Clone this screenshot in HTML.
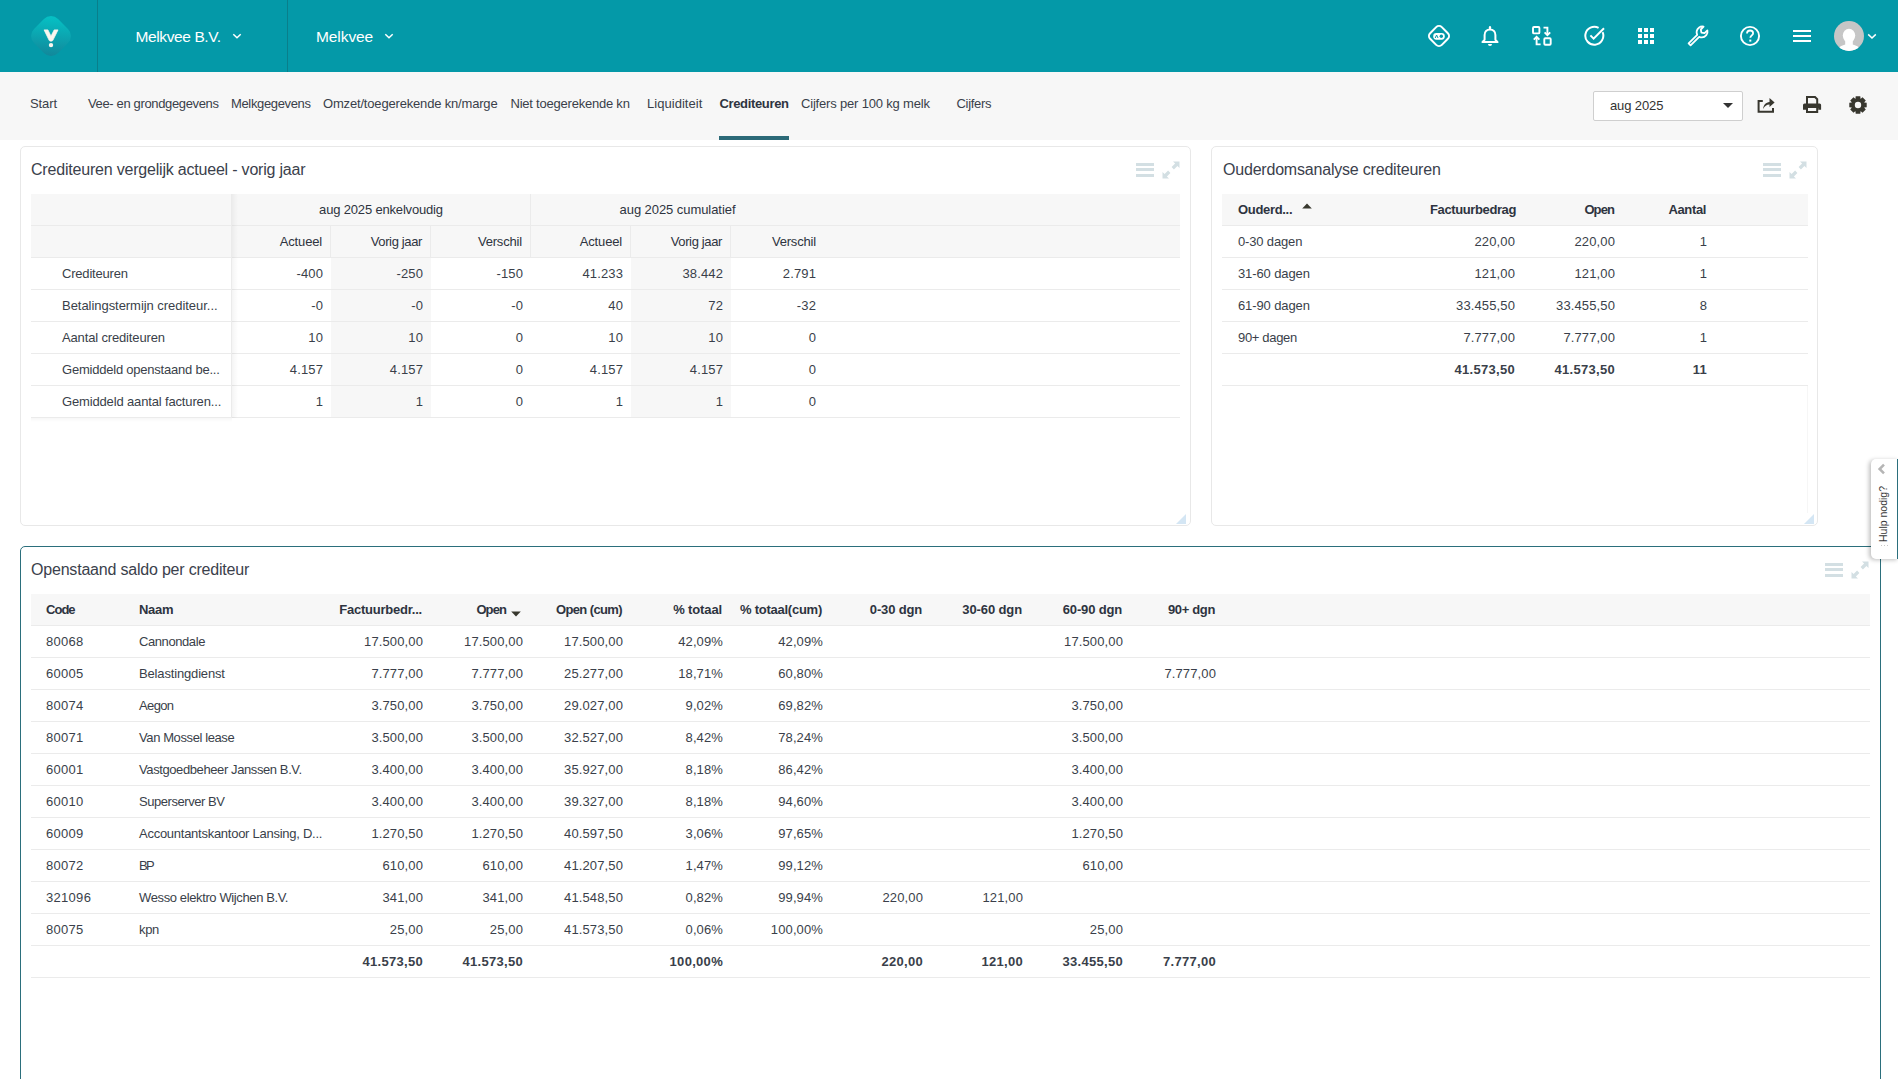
<!DOCTYPE html>
<html><head><meta charset="utf-8">
<style>
*{box-sizing:border-box;margin:0;padding:0}
html,body{width:1898px;height:1079px;overflow:hidden;background:#fff;font-family:"Liberation Sans",sans-serif;color:#3a3f4a}
.ab{position:absolute}
.nw{white-space:nowrap}
#top{position:absolute;left:0;top:0;width:1898px;height:72px;background:#0499a8}
.sep{position:absolute;top:0;width:1px;height:72px;background:#0a7f8b}
.htxt{position:absolute;top:28px;color:#fff;font-size:15.5px;line-height:18px;white-space:nowrap}
#nav{position:absolute;left:0;top:72px;width:1898px;height:68px;background:#f7f7f7}
.tab{position:absolute;top:96px;font-size:13px;line-height:15px;color:#3a3f4a;white-space:nowrap}
.panel{position:absolute;background:#fff;border:1px solid #e8e8e8;border-radius:5px}
.ptitle{position:absolute;font-size:16px;line-height:18px;color:#3b414c;white-space:nowrap;letter-spacing:-0.2px}
.row{position:absolute;height:32px;border-bottom:1px solid #ebebeb;display:flex}
.cell{height:31px;line-height:31px;font-size:13px;padding:0 8px;white-space:nowrap;overflow:hidden;text-align:right;flex:none}
.hd{background:#f7f7f7}
.hd .cell{color:#2e3440}
.cell{letter-spacing:0.12px}
.l{text-align:left;letter-spacing:-0.3px}
.hd .cell{letter-spacing:-0.3px}
.code{letter-spacing:0.3px}
.hd .b{padding-right:9px}
.c{text-align:center}
.b{font-weight:bold;letter-spacing:-0.25px}
.bn{font-weight:bold;letter-spacing:0.3px}
.g{background:#f7f7f7}
.br{border-right:1px solid #ebebeb}
.pic{position:absolute}
</style></head><body>

<div id="top">
<svg class="ab" style="left:26px;top:11px" width="50" height="50" viewBox="0 0 50 50">
<defs><linearGradient id="lg" x1="0.15" y1="0.1" x2="0.9" y2="0.95"><stop offset="0" stop-color="#06bfc3"/><stop offset="1" stop-color="#12879a"/></linearGradient></defs>
<rect x="8" y="8" width="34" height="34" rx="10" transform="rotate(45 25 25)" fill="url(#lg)"/>
<path d="M18.1 18.9 L21.9 18.9 L25 25.2 L28.2 18.9 L32 18.9 L26.7 29.6 Q25 30.8 23.3 29.6 Z" fill="#fbf6ef" stroke="#fbf6ef" stroke-width="0.8" stroke-linejoin="round"/>
<circle cx="25" cy="34.1" r="2.2" fill="#fbf6ef"/>
</svg>
<div class="sep" style="left:97px"></div>
<div class="htxt" style="left:135.5px;letter-spacing:-0.393px">Melkvee B.V.</div>
<svg class="ab" style="left:231px;top:32px" width="12" height="8" viewBox="0 0 12 8"><path d="M2.3 2.2 L6 5.8 L9.7 2.2" fill="none" stroke="#fff" stroke-width="1.5"/></svg>
<div class="sep" style="left:287px"></div>
<div class="htxt" style="left:316px;letter-spacing:-0.086px">Melkvee</div>
<svg class="ab" style="left:383px;top:32px" width="12" height="8" viewBox="0 0 12 8"><path d="M2.3 2.2 L6 5.8 L9.7 2.2" fill="none" stroke="#fff" stroke-width="1.5"/></svg>
<svg class="ab" style="left:1427px;top:24px" width="24" height="24" viewBox="0 0 24 24">
<rect x="3.75" y="3.75" width="16.5" height="16.5" rx="4" transform="rotate(45 12 12)" fill="none" stroke="#fff" stroke-width="2"/>
<rect x="6.2" y="9.1" width="11.6" height="6.6" rx="3.1" fill="#fff"/>
<path d="M8.2 14 L9.6 11 L11 14" fill="none" stroke="#0499a8" stroke-width="1"/>
<circle cx="14.3" cy="12.2" r="1.7" fill="#0499a8"/>
</svg>
<svg class="ab" style="left:1480px;top:25px" width="20" height="22" viewBox="0 0 20 22">
<path d="M10 2.2 L10 3.6" stroke="#fff" stroke-width="2.2" stroke-linecap="round"/>
<path d="M2.4 17.1 L4.6 14.8 L4.6 9.9 C4.6 6.7 6.8 4.4 10 4.4 C13.2 4.4 15.4 6.7 15.4 9.9 L15.4 14.8 L17.6 17.1 Z" fill="none" stroke="#fff" stroke-width="2" stroke-linejoin="round"/>
<path d="M8 19 L12 19 A2 1.9 0 0 1 8 19 Z" fill="#fff"/>
</svg>
<svg class="ab" style="left:1531px;top:25px" width="22" height="22" viewBox="0 0 22 22">
<rect x="2" y="2" width="6.4" height="6.4" rx="1" fill="none" stroke="#fff" stroke-width="1.9"/>
<rect x="13.3" y="13.3" width="6.4" height="6.4" rx="1" fill="none" stroke="#fff" stroke-width="1.9"/>
<path d="M12.5 2.6 L16.4 2.6 L16.4 9.6" fill="none" stroke="#fff" stroke-width="1.9"/>
<path d="M13.6 7.4 L16.4 10.2 L19.2 7.4" fill="none" stroke="#fff" stroke-width="1.9"/>
<path d="M9.6 19.4 L5.6 19.4 L5.6 12.4" fill="none" stroke="#fff" stroke-width="1.9"/>
<path d="M2.8 14.6 L5.6 11.8 L8.4 14.6" fill="none" stroke="#fff" stroke-width="1.9"/>
</svg>
<svg class="ab" style="left:1583.7px;top:25px" width="22" height="22" viewBox="0 0 22 22">
<path d="M18.6 7.2 A9 9 0 1 1 14.6 2.8" fill="none" stroke="#fff" stroke-width="2"/>
<path d="M6.4 10.4 L9.6 13.6 L20 3.2" fill="none" stroke="#fff" stroke-width="2"/>
</svg>
<svg class="ab" style="left:1638px;top:28px" width="16" height="16" viewBox="0 0 16 16"><rect x="0" y="0" width="4" height="4" fill="#fff"/><rect x="0" y="6" width="4" height="4" fill="#fff"/><rect x="0" y="12" width="4" height="4" fill="#fff"/><rect x="6" y="0" width="4" height="4" fill="#fff"/><rect x="6" y="6" width="4" height="4" fill="#fff"/><rect x="6" y="12" width="4" height="4" fill="#fff"/><rect x="12" y="0" width="4" height="4" fill="#fff"/><rect x="12" y="6" width="4" height="4" fill="#fff"/><rect x="12" y="12" width="4" height="4" fill="#fff"/></svg>
<svg class="ab" style="left:1686px;top:24px" width="24" height="24" viewBox="0 0 24 24">
<path d="M2.6 19.4 L11.2 10.8 C10.2 8.4 10.8 5.4 12.9 3.7 C14.3 2.6 16 2.2 17.6 2.6 L14.8 5.5 L15.4 8.6 L18.5 9.2 L21.4 6.4 C21.8 8 21.4 9.7 20.3 11.1 C18.6 13.2 15.6 13.8 13.2 12.8 L4.6 21.4 Z" fill="none" stroke="#fff" stroke-width="1.8" stroke-linejoin="round"/>
</svg>
<svg class="ab" style="left:1739px;top:25px" width="22" height="22" viewBox="0 0 22 22">
<circle cx="11" cy="11" r="9.1" fill="none" stroke="#fff" stroke-width="1.9"/>
<path d="M8 8.6 C8 6.7 9.4 5.5 11.1 5.5 C12.8 5.5 14.1 6.7 14.1 8.3 C14.1 10.3 11.3 10.6 11.3 12.8" fill="none" stroke="#fff" stroke-width="1.8"/>
<rect x="10.3" y="14.6" width="2" height="2" fill="#fff"/>
</svg>
<div class="ab" style="left:1793px;top:30px;width:18px;height:2px;background:#fff"></div>
<div class="ab" style="left:1793px;top:35px;width:18px;height:2px;background:#fff"></div>
<div class="ab" style="left:1793px;top:40px;width:18px;height:2px;background:#fff"></div>
<svg class="ab" style="left:1834px;top:21px" width="30" height="30" viewBox="0 0 30 30">
<defs><clipPath id="cc"><circle cx="15" cy="15" r="15"/></clipPath></defs>
<circle cx="15" cy="15" r="15" fill="#c6c6c6"/>
<g clip-path="url(#cc)"><ellipse cx="15" cy="14.6" rx="6.2" ry="6.9" fill="#fff"/><rect x="11.2" y="19.5" width="7.6" height="5" fill="#fff"/><ellipse cx="15" cy="30.6" rx="11.8" ry="7.4" fill="#fff"/></g>
</svg>
<svg class="ab" style="left:1867px;top:33px" width="10" height="7" viewBox="0 0 10 7"><path d="M1.2 1.4 L5 5 L8.8 1.4" fill="none" stroke="#fff" stroke-width="1.5"/></svg>
</div>
<div id="nav"></div>
<div class="tab" style="left:30.0px;letter-spacing:-0.113px">Start</div>
<div class="tab" style="left:88.0px;letter-spacing:-0.355px">Vee- en grondgegevens</div>
<div class="tab" style="left:231.0px;letter-spacing:-0.351px">Melkgegevens</div>
<div class="tab" style="left:323.0px;letter-spacing:-0.175px">Omzet/toegerekende kn/marge</div>
<div class="tab" style="left:510.5px;letter-spacing:-0.222px">Niet toegerekende kn</div>
<div class="tab" style="left:647.0px;letter-spacing:0.035px">Liquiditeit</div>
<div class="tab" style="left:719.4px;letter-spacing:-0.337px;font-weight:bold;color:#2e3440">Crediteuren</div>
<div class="tab" style="left:801.0px;letter-spacing:-0.180px">Cijfers per 100 kg melk</div>
<div class="tab" style="left:956.5px;letter-spacing:-0.307px">Cijfers</div>
<div class="ab" style="left:719px;top:136px;width:70px;height:4px;background:#2c6a78"></div>
<div class="ab" style="left:1593px;top:91px;width:150px;height:30px;background:#fff;border:1px solid #cfcfcf;border-radius:2px"></div>
<div class="ab nw" style="left:1610px;top:98px;font-size:13px;line-height:15px;color:#333;letter-spacing:-0.12px">aug 2025</div>
<svg class="ab" style="left:1722px;top:102px" width="12" height="7" viewBox="0 0 12 7"><path d="M1 1 L11 1 L6 6 Z" fill="#333"/></svg>
<svg class="ab" style="left:1756px;top:96px" width="20" height="18" viewBox="0 0 20 18">
<path d="M6.8 4.9 L2.6 4.9 L2.6 15.7 L17 15.7 L17 12.1" fill="none" stroke="#38372f" stroke-width="2"/>
<path d="M7.2 13 C7.4 9 10 6.4 13.5 6.1 L13.5 1.9 L18.6 6.4 L13.5 10.9 L13.5 8.4 C10.6 8.4 8.6 10 7.2 13 Z" fill="#38372f"/>
</svg>
<svg class="ab" style="left:1802px;top:95px" width="21" height="20" viewBox="0 0 21 20">
<path d="M5 9 L5 2 L13 2 L15.2 4.2 L15.2 9" fill="none" stroke="#38372f" stroke-width="2"/>
<path d="M1 10 Q1 8.5 2.5 8.5 L17.6 8.5 Q19.1 8.5 19.1 10 L19.1 14.8 L16.2 14.8 L16.2 13 L4 13 L4 14.8 L1 14.8 Z" fill="#38372f"/>
<path d="M5 13 L5 17 L15.2 17 L15.2 13" fill="none" stroke="#38372f" stroke-width="2"/>
</svg>
<svg class="ab" style="left:1849px;top:96px" width="18" height="18" viewBox="0 0 18 18"><path d="M17.70,6.69 L17.70,11.31 L15.08,11.57 L15.12,11.48 L16.79,13.51 L13.51,16.79 L11.48,15.12 L11.57,15.08 L11.31,17.70 L6.69,17.70 L6.43,15.08 L6.52,15.12 L4.49,16.79 L1.21,13.51 L2.88,11.48 L2.92,11.57 L0.30,11.31 L0.30,6.69 L2.92,6.43 L2.88,6.52 L1.21,4.49 L4.49,1.21 L6.52,2.88 L6.43,2.92 L6.69,0.30 L11.31,0.30 L11.57,2.92 L11.48,2.88 L13.51,1.21 L16.79,4.49 L15.12,6.52 L15.08,6.43 Z M9 5.8 A3.2 3.2 0 1 0 9 12.2 A3.2 3.2 0 1 0 9 5.8 Z" fill="#38372f" fill-rule="evenodd"/></svg>
<div class="panel" style="left:20px;top:146px;width:1171px;height:380px"></div>
<div class="ptitle" style="left:31px;top:161px">Crediteuren vergelijk actueel - vorig jaar</div>
<div class="ab" style="left:1136px;top:163.0px;width:17.5px;height:3px;background:#d3dfe3"></div><div class="ab" style="left:1136px;top:168.0px;width:17.5px;height:3px;background:#d3dfe3"></div><div class="ab" style="left:1136px;top:174.0px;width:17.5px;height:3px;background:#d3dfe3"></div><svg class="ab" style="left:1162px;top:161px" width="18" height="18" viewBox="0 0 18 18">
<path d="M11 0.5 L17.5 0.5 L17.5 7 L15.4 4.9 L11.9 8.4 L9.6 6.1 L13.1 2.6 Z M7 17.5 L0.5 17.5 L0.5 11 L2.6 13.1 L6.1 9.6 L8.4 11.9 L4.9 15.4 Z" fill="#d3dfe3"/></svg>
<svg class="ab" style="left:1176px;top:514px" width="10" height="10" viewBox="0 0 10 10"><path d="M10 0 L10 10 L0 10 Z" fill="#d4e6f4"/></svg>
<div class="row hd" style="left:31px;top:194px;width:1149px;"><div class="cell br" style="width:201px"></div><div class="cell c br" style="width:299px"><span style="letter-spacing:-0.173px">aug 2025 enkelvoudig</span></div><div class="cell c" style="width:293px"><span style="letter-spacing:-0.062px">aug 2025 cumulatief</span></div><div class="cell " style="width:356px"></div></div>
<div class="row hd" style="left:31px;top:226px;width:1149px;"><div class="cell br" style="width:201px"></div><div class="cell br" style="width:99px"><span style="letter-spacing:-0.163px">Actueel</span></div><div class="cell br" style="width:100px"><span style="letter-spacing:-0.360px">Vorig jaar</span></div><div class="cell br" style="width:100px"><span style="letter-spacing:-0.176px">Verschil</span></div><div class="cell br" style="width:100px"><span style="letter-spacing:-0.163px">Actueel</span></div><div class="cell br" style="width:100px"><span style="letter-spacing:-0.360px">Vorig jaar</span></div><div class="cell " style="width:93px"><span style="letter-spacing:-0.176px">Verschil</span></div><div class="cell " style="width:356px"></div></div>
<div class="row " style="left:31px;top:258px;width:1149px;"><div class="cell l br" style="width:201px"><span style="padding-left:23px"><span style="letter-spacing:-0.195px">Crediteuren</span></span></div><div class="cell " style="width:99px">-400</div><div class="cell g" style="width:100px">-250</div><div class="cell " style="width:100px">-150</div><div class="cell " style="width:100px">41.233</div><div class="cell g" style="width:100px">38.442</div><div class="cell " style="width:93px">2.791</div><div class="cell " style="width:356px"></div></div>
<div class="row " style="left:31px;top:290px;width:1149px;"><div class="cell l br" style="width:201px"><span style="padding-left:23px"><span style="letter-spacing:-0.044px">Betalingstermijn crediteur...</span></span></div><div class="cell " style="width:99px">-0</div><div class="cell g" style="width:100px">-0</div><div class="cell " style="width:100px">-0</div><div class="cell " style="width:100px">40</div><div class="cell g" style="width:100px">72</div><div class="cell " style="width:93px">-32</div><div class="cell " style="width:356px"></div></div>
<div class="row " style="left:31px;top:322px;width:1149px;"><div class="cell l br" style="width:201px"><span style="padding-left:23px"><span style="letter-spacing:-0.150px">Aantal crediteuren</span></span></div><div class="cell " style="width:99px">10</div><div class="cell g" style="width:100px">10</div><div class="cell " style="width:100px">0</div><div class="cell " style="width:100px">10</div><div class="cell g" style="width:100px">10</div><div class="cell " style="width:93px">0</div><div class="cell " style="width:356px"></div></div>
<div class="row " style="left:31px;top:354px;width:1149px;"><div class="cell l br" style="width:201px"><span style="padding-left:23px"><span style="letter-spacing:-0.220px">Gemiddeld openstaand be...</span></span></div><div class="cell " style="width:99px">4.157</div><div class="cell g" style="width:100px">4.157</div><div class="cell " style="width:100px">0</div><div class="cell " style="width:100px">4.157</div><div class="cell g" style="width:100px">4.157</div><div class="cell " style="width:93px">0</div><div class="cell " style="width:356px"></div></div>
<div class="row " style="left:31px;top:386px;width:1149px;"><div class="cell l br" style="width:201px"><span style="padding-left:23px"><span style="letter-spacing:-0.150px">Gemiddeld aantal facturen...</span></span></div><div class="cell " style="width:99px">1</div><div class="cell g" style="width:100px">1</div><div class="cell " style="width:100px">0</div><div class="cell " style="width:100px">1</div><div class="cell g" style="width:100px">1</div><div class="cell " style="width:93px">0</div><div class="cell " style="width:356px"></div></div>
<div class="ab" style="left:232px;top:194px;width:6px;height:224px;background:linear-gradient(to right,rgba(0,0,0,0.045),rgba(0,0,0,0))"></div>
<div class="ab" style="left:31px;top:418px;width:201px;height:4px;background:linear-gradient(to bottom,rgba(0,0,0,0.03),rgba(0,0,0,0))"></div>
<div class="panel" style="left:1211px;top:146px;width:607px;height:380px"></div>
<div class="ptitle" style="left:1223px;top:161px">Ouderdomsanalyse crediteuren</div>
<div class="ab" style="left:1763px;top:163.0px;width:17.5px;height:3px;background:#d3dfe3"></div><div class="ab" style="left:1763px;top:168.0px;width:17.5px;height:3px;background:#d3dfe3"></div><div class="ab" style="left:1763px;top:174.0px;width:17.5px;height:3px;background:#d3dfe3"></div><svg class="ab" style="left:1789px;top:161px" width="18" height="18" viewBox="0 0 18 18">
<path d="M11 0.5 L17.5 0.5 L17.5 7 L15.4 4.9 L11.9 8.4 L9.6 6.1 L13.1 2.6 Z M7 17.5 L0.5 17.5 L0.5 11 L2.6 13.1 L6.1 9.6 L8.4 11.9 L4.9 15.4 Z" fill="#d3dfe3"/></svg>
<svg class="ab" style="left:1804px;top:514px" width="10" height="10" viewBox="0 0 10 10"><path d="M10 0 L10 10 L0 10 Z" fill="#d4e6f4"/></svg>
<div class="ab" style="left:1807px;top:386px;width:1px;height:127px;background:#f6f6f6"></div>
<div class="row hd" style="left:1222px;top:194px;width:586px;"><div class="cell l b" style="width:200px"><span style="padding-left:8px"><span style="letter-spacing:-0.318px">Ouderd...</span></span></div><div class="cell b" style="width:101px"><span style="letter-spacing:-0.385px">Factuurbedrag</span></div><div class="cell b" style="width:100px"><span style="letter-spacing:-0.906px">Open</span></div><div class="cell b" style="width:92px"><span style="letter-spacing:-0.367px">Aantal</span></div><div class="cell " style="width:93px"></div></div>
<svg class="ab" style="left:1302px;top:202.5px" width="10" height="6" viewBox="0 0 10 6"><path d="M0.2 5.6 L5 0.4 L9.8 5.6 Z" fill="#38382e"/></svg>
<div class="row " style="left:1222px;top:226px;width:586px;"><div class="cell l" style="width:200px"><span style="padding-left:8px"><span style="letter-spacing:-0.157px">0-30 dagen</span></span></div><div class="cell " style="width:101px">220,00</div><div class="cell " style="width:100px">220,00</div><div class="cell " style="width:92px">1</div><div class="cell " style="width:93px"></div></div>
<div class="row " style="left:1222px;top:258px;width:586px;"><div class="cell l" style="width:200px"><span style="padding-left:8px"><span style="letter-spacing:-0.105px">31-60 dagen</span></span></div><div class="cell " style="width:101px">121,00</div><div class="cell " style="width:100px">121,00</div><div class="cell " style="width:92px">1</div><div class="cell " style="width:93px"></div></div>
<div class="row " style="left:1222px;top:290px;width:586px;"><div class="cell l" style="width:200px"><span style="padding-left:8px"><span style="letter-spacing:-0.105px">61-90 dagen</span></span></div><div class="cell " style="width:101px">33.455,50</div><div class="cell " style="width:100px">33.455,50</div><div class="cell " style="width:92px">8</div><div class="cell " style="width:93px"></div></div>
<div class="row " style="left:1222px;top:322px;width:586px;"><div class="cell l" style="width:200px"><span style="padding-left:8px"><span style="letter-spacing:-0.330px">90+ dagen</span></span></div><div class="cell " style="width:101px">7.777,00</div><div class="cell " style="width:100px">7.777,00</div><div class="cell " style="width:92px">1</div><div class="cell " style="width:93px"></div></div>
<div class="row " style="left:1222px;top:354px;width:586px;"><div class="cell l" style="width:200px"></div><div class="cell bn" style="width:101px">41.573,50</div><div class="cell bn" style="width:100px">41.573,50</div><div class="cell bn" style="width:92px">11</div><div class="cell " style="width:93px"></div></div>
<div class="panel" style="left:20px;top:546px;width:1861px;height:600px;border-color:#2b6f7c"></div>
<div class="ptitle" style="left:31px;top:561px">Openstaand saldo per crediteur</div>
<div class="ab" style="left:1825px;top:563.0px;width:17.5px;height:3px;background:#d3dfe3"></div><div class="ab" style="left:1825px;top:568.0px;width:17.5px;height:3px;background:#d3dfe3"></div><div class="ab" style="left:1825px;top:574.0px;width:17.5px;height:3px;background:#d3dfe3"></div><svg class="ab" style="left:1851px;top:561px" width="18" height="18" viewBox="0 0 18 18">
<path d="M11 0.5 L17.5 0.5 L17.5 7 L15.4 4.9 L11.9 8.4 L9.6 6.1 L13.1 2.6 Z M7 17.5 L0.5 17.5 L0.5 11 L2.6 13.1 L6.1 9.6 L8.4 11.9 L4.9 15.4 Z" fill="#d3dfe3"/></svg>
<div class="row hd" style="left:31px;top:594px;width:1839px;"><div class="cell l b" style="width:100px"><span style="padding-left:7px"><span style="letter-spacing:-0.967px">Code</span></span></div><div class="cell l b" style="width:200px"><span style="letter-spacing:-0.307px">Naam</span></div><div class="cell  b" style="width:100px"><span style="letter-spacing:-0.227px">Factuurbedr...</span></div><div class="cell  b" style="width:100px"><span style="margin-right:16px"><span style="letter-spacing:-0.906px">Open</span></span></div><div class="cell  b" style="width:100px"><span style="letter-spacing:-0.613px">Open (cum)</span></div><div class="cell  b" style="width:100px"><span style="letter-spacing:-0.121px">% totaal</span></div><div class="cell  b" style="width:100px"><span style="letter-spacing:-0.245px">% totaal(cum)</span></div><div class="cell  b" style="width:100px"><span style="letter-spacing:-0.165px">0-30 dgn</span></div><div class="cell  b" style="width:100px"><span style="letter-spacing:-0.111px">30-60 dgn</span></div><div class="cell  b" style="width:100px"><span style="letter-spacing:-0.161px">60-90 dgn</span></div><div class="cell  b" style="width:93px"><span style="letter-spacing:-0.347px">90+ dgn</span></div><div class="cell " style="width:646px"></div></div>
<svg class="ab" style="left:510.5px;top:610.5px" width="10" height="6" viewBox="0 0 10 6"><path d="M0.2 0.4 L9.8 0.4 L5 5.6 Z" fill="#38382e"/></svg>
<div class="row " style="left:31px;top:626px;width:1839px;"><div class="cell l code" style="width:100px"><span style="padding-left:7px">80068</span></div><div class="cell l" style="width:200px"><span style="letter-spacing:-0.417px">Cannondale</span></div><div class="cell " style="width:100px">17.500,00</div><div class="cell " style="width:100px">17.500,00</div><div class="cell " style="width:100px">17.500,00</div><div class="cell " style="width:100px">42,09%</div><div class="cell " style="width:100px">42,09%</div><div class="cell " style="width:100px"></div><div class="cell " style="width:100px"></div><div class="cell " style="width:100px">17.500,00</div><div class="cell " style="width:93px"></div><div class="cell " style="width:646px"></div></div>
<div class="row " style="left:31px;top:658px;width:1839px;"><div class="cell l code" style="width:100px"><span style="padding-left:7px">60005</span></div><div class="cell l" style="width:200px"><span style="letter-spacing:-0.157px">Belastingdienst</span></div><div class="cell " style="width:100px">7.777,00</div><div class="cell " style="width:100px">7.777,00</div><div class="cell " style="width:100px">25.277,00</div><div class="cell " style="width:100px">18,71%</div><div class="cell " style="width:100px">60,80%</div><div class="cell " style="width:100px"></div><div class="cell " style="width:100px"></div><div class="cell " style="width:100px"></div><div class="cell " style="width:93px">7.777,00</div><div class="cell " style="width:646px"></div></div>
<div class="row " style="left:31px;top:690px;width:1839px;"><div class="cell l code" style="width:100px"><span style="padding-left:7px">80074</span></div><div class="cell l" style="width:200px"><span style="letter-spacing:-0.627px">Aegon</span></div><div class="cell " style="width:100px">3.750,00</div><div class="cell " style="width:100px">3.750,00</div><div class="cell " style="width:100px">29.027,00</div><div class="cell " style="width:100px">9,02%</div><div class="cell " style="width:100px">69,82%</div><div class="cell " style="width:100px"></div><div class="cell " style="width:100px"></div><div class="cell " style="width:100px">3.750,00</div><div class="cell " style="width:93px"></div><div class="cell " style="width:646px"></div></div>
<div class="row " style="left:31px;top:722px;width:1839px;"><div class="cell l code" style="width:100px"><span style="padding-left:7px">80071</span></div><div class="cell l" style="width:200px"><span style="letter-spacing:-0.398px">Van Mossel lease</span></div><div class="cell " style="width:100px">3.500,00</div><div class="cell " style="width:100px">3.500,00</div><div class="cell " style="width:100px">32.527,00</div><div class="cell " style="width:100px">8,42%</div><div class="cell " style="width:100px">78,24%</div><div class="cell " style="width:100px"></div><div class="cell " style="width:100px"></div><div class="cell " style="width:100px">3.500,00</div><div class="cell " style="width:93px"></div><div class="cell " style="width:646px"></div></div>
<div class="row " style="left:31px;top:754px;width:1839px;"><div class="cell l code" style="width:100px"><span style="padding-left:7px">60001</span></div><div class="cell l" style="width:200px"><span style="letter-spacing:-0.401px">Vastgoedbeheer Janssen B.V.</span></div><div class="cell " style="width:100px">3.400,00</div><div class="cell " style="width:100px">3.400,00</div><div class="cell " style="width:100px">35.927,00</div><div class="cell " style="width:100px">8,18%</div><div class="cell " style="width:100px">86,42%</div><div class="cell " style="width:100px"></div><div class="cell " style="width:100px"></div><div class="cell " style="width:100px">3.400,00</div><div class="cell " style="width:93px"></div><div class="cell " style="width:646px"></div></div>
<div class="row " style="left:31px;top:786px;width:1839px;"><div class="cell l code" style="width:100px"><span style="padding-left:7px">60010</span></div><div class="cell l" style="width:200px"><span style="letter-spacing:-0.445px">Superserver BV</span></div><div class="cell " style="width:100px">3.400,00</div><div class="cell " style="width:100px">3.400,00</div><div class="cell " style="width:100px">39.327,00</div><div class="cell " style="width:100px">8,18%</div><div class="cell " style="width:100px">94,60%</div><div class="cell " style="width:100px"></div><div class="cell " style="width:100px"></div><div class="cell " style="width:100px">3.400,00</div><div class="cell " style="width:93px"></div><div class="cell " style="width:646px"></div></div>
<div class="row " style="left:31px;top:818px;width:1839px;"><div class="cell l code" style="width:100px"><span style="padding-left:7px">60009</span></div><div class="cell l" style="width:200px"><span style="letter-spacing:-0.263px">Accountantskantoor Lansing, D...</span></div><div class="cell " style="width:100px">1.270,50</div><div class="cell " style="width:100px">1.270,50</div><div class="cell " style="width:100px">40.597,50</div><div class="cell " style="width:100px">3,06%</div><div class="cell " style="width:100px">97,65%</div><div class="cell " style="width:100px"></div><div class="cell " style="width:100px"></div><div class="cell " style="width:100px">1.270,50</div><div class="cell " style="width:93px"></div><div class="cell " style="width:646px"></div></div>
<div class="row " style="left:31px;top:850px;width:1839px;"><div class="cell l code" style="width:100px"><span style="padding-left:7px">80072</span></div><div class="cell l" style="width:200px"><span style="letter-spacing:-1.744px">BP</span></div><div class="cell " style="width:100px">610,00</div><div class="cell " style="width:100px">610,00</div><div class="cell " style="width:100px">41.207,50</div><div class="cell " style="width:100px">1,47%</div><div class="cell " style="width:100px">99,12%</div><div class="cell " style="width:100px"></div><div class="cell " style="width:100px"></div><div class="cell " style="width:100px">610,00</div><div class="cell " style="width:93px"></div><div class="cell " style="width:646px"></div></div>
<div class="row " style="left:31px;top:882px;width:1839px;"><div class="cell l code" style="width:100px"><span style="padding-left:7px">321096</span></div><div class="cell l" style="width:200px"><span style="letter-spacing:-0.379px">Wesso elektro Wijchen B.V.</span></div><div class="cell " style="width:100px">341,00</div><div class="cell " style="width:100px">341,00</div><div class="cell " style="width:100px">41.548,50</div><div class="cell " style="width:100px">0,82%</div><div class="cell " style="width:100px">99,94%</div><div class="cell " style="width:100px">220,00</div><div class="cell " style="width:100px">121,00</div><div class="cell " style="width:100px"></div><div class="cell " style="width:93px"></div><div class="cell " style="width:646px"></div></div>
<div class="row " style="left:31px;top:914px;width:1839px;"><div class="cell l code" style="width:100px"><span style="padding-left:7px">80075</span></div><div class="cell l" style="width:200px"><span style="letter-spacing:-0.334px">kpn</span></div><div class="cell " style="width:100px">25,00</div><div class="cell " style="width:100px">25,00</div><div class="cell " style="width:100px">41.573,50</div><div class="cell " style="width:100px">0,06%</div><div class="cell " style="width:100px">100,00%</div><div class="cell " style="width:100px"></div><div class="cell " style="width:100px"></div><div class="cell " style="width:100px">25,00</div><div class="cell " style="width:93px"></div><div class="cell " style="width:646px"></div></div>
<div class="row " style="left:31px;top:946px;width:1839px;"><div class="cell l bn code" style="width:100px"></div><div class="cell l bn" style="width:200px"></div><div class="cell  bn" style="width:100px">41.573,50</div><div class="cell  bn" style="width:100px">41.573,50</div><div class="cell  bn" style="width:100px"></div><div class="cell  bn" style="width:100px">100,00%</div><div class="cell  bn" style="width:100px"></div><div class="cell  bn" style="width:100px">220,00</div><div class="cell  bn" style="width:100px">121,00</div><div class="cell  bn" style="width:100px">33.455,50</div><div class="cell  bn" style="width:93px">7.777,00</div><div class="cell " style="width:646px"></div></div>
<div class="ab" style="left:1871px;top:459px;width:28px;height:100px;background:#fff;border-radius:5px 0 0 5px;box-shadow:-2px 1px 4px rgba(0,0,0,0.25);border-right:2px solid #2b6f7c"></div>
<svg class="ab" style="left:1877px;top:463px" width="9" height="12" viewBox="0 0 9 12"><path d="M7 1.6 L2.6 6 L7 10.4" fill="none" stroke="#b5b5b5" stroke-width="2.5"/></svg>
<div class="ab nw" style="left:1882.5px;top:513.5px;font-size:10.5px;line-height:12px;color:#3a3a3a;transform:translate(-50%,-50%) rotate(-90deg)">Hulp nodig?</div>
<div class="ab" style="left:1881px;top:545px;width:8px;height:1px;background:repeating-linear-gradient(to right,#c8c8c8 0,#c8c8c8 1px,transparent 1px,transparent 3px)"></div>
</body></html>
